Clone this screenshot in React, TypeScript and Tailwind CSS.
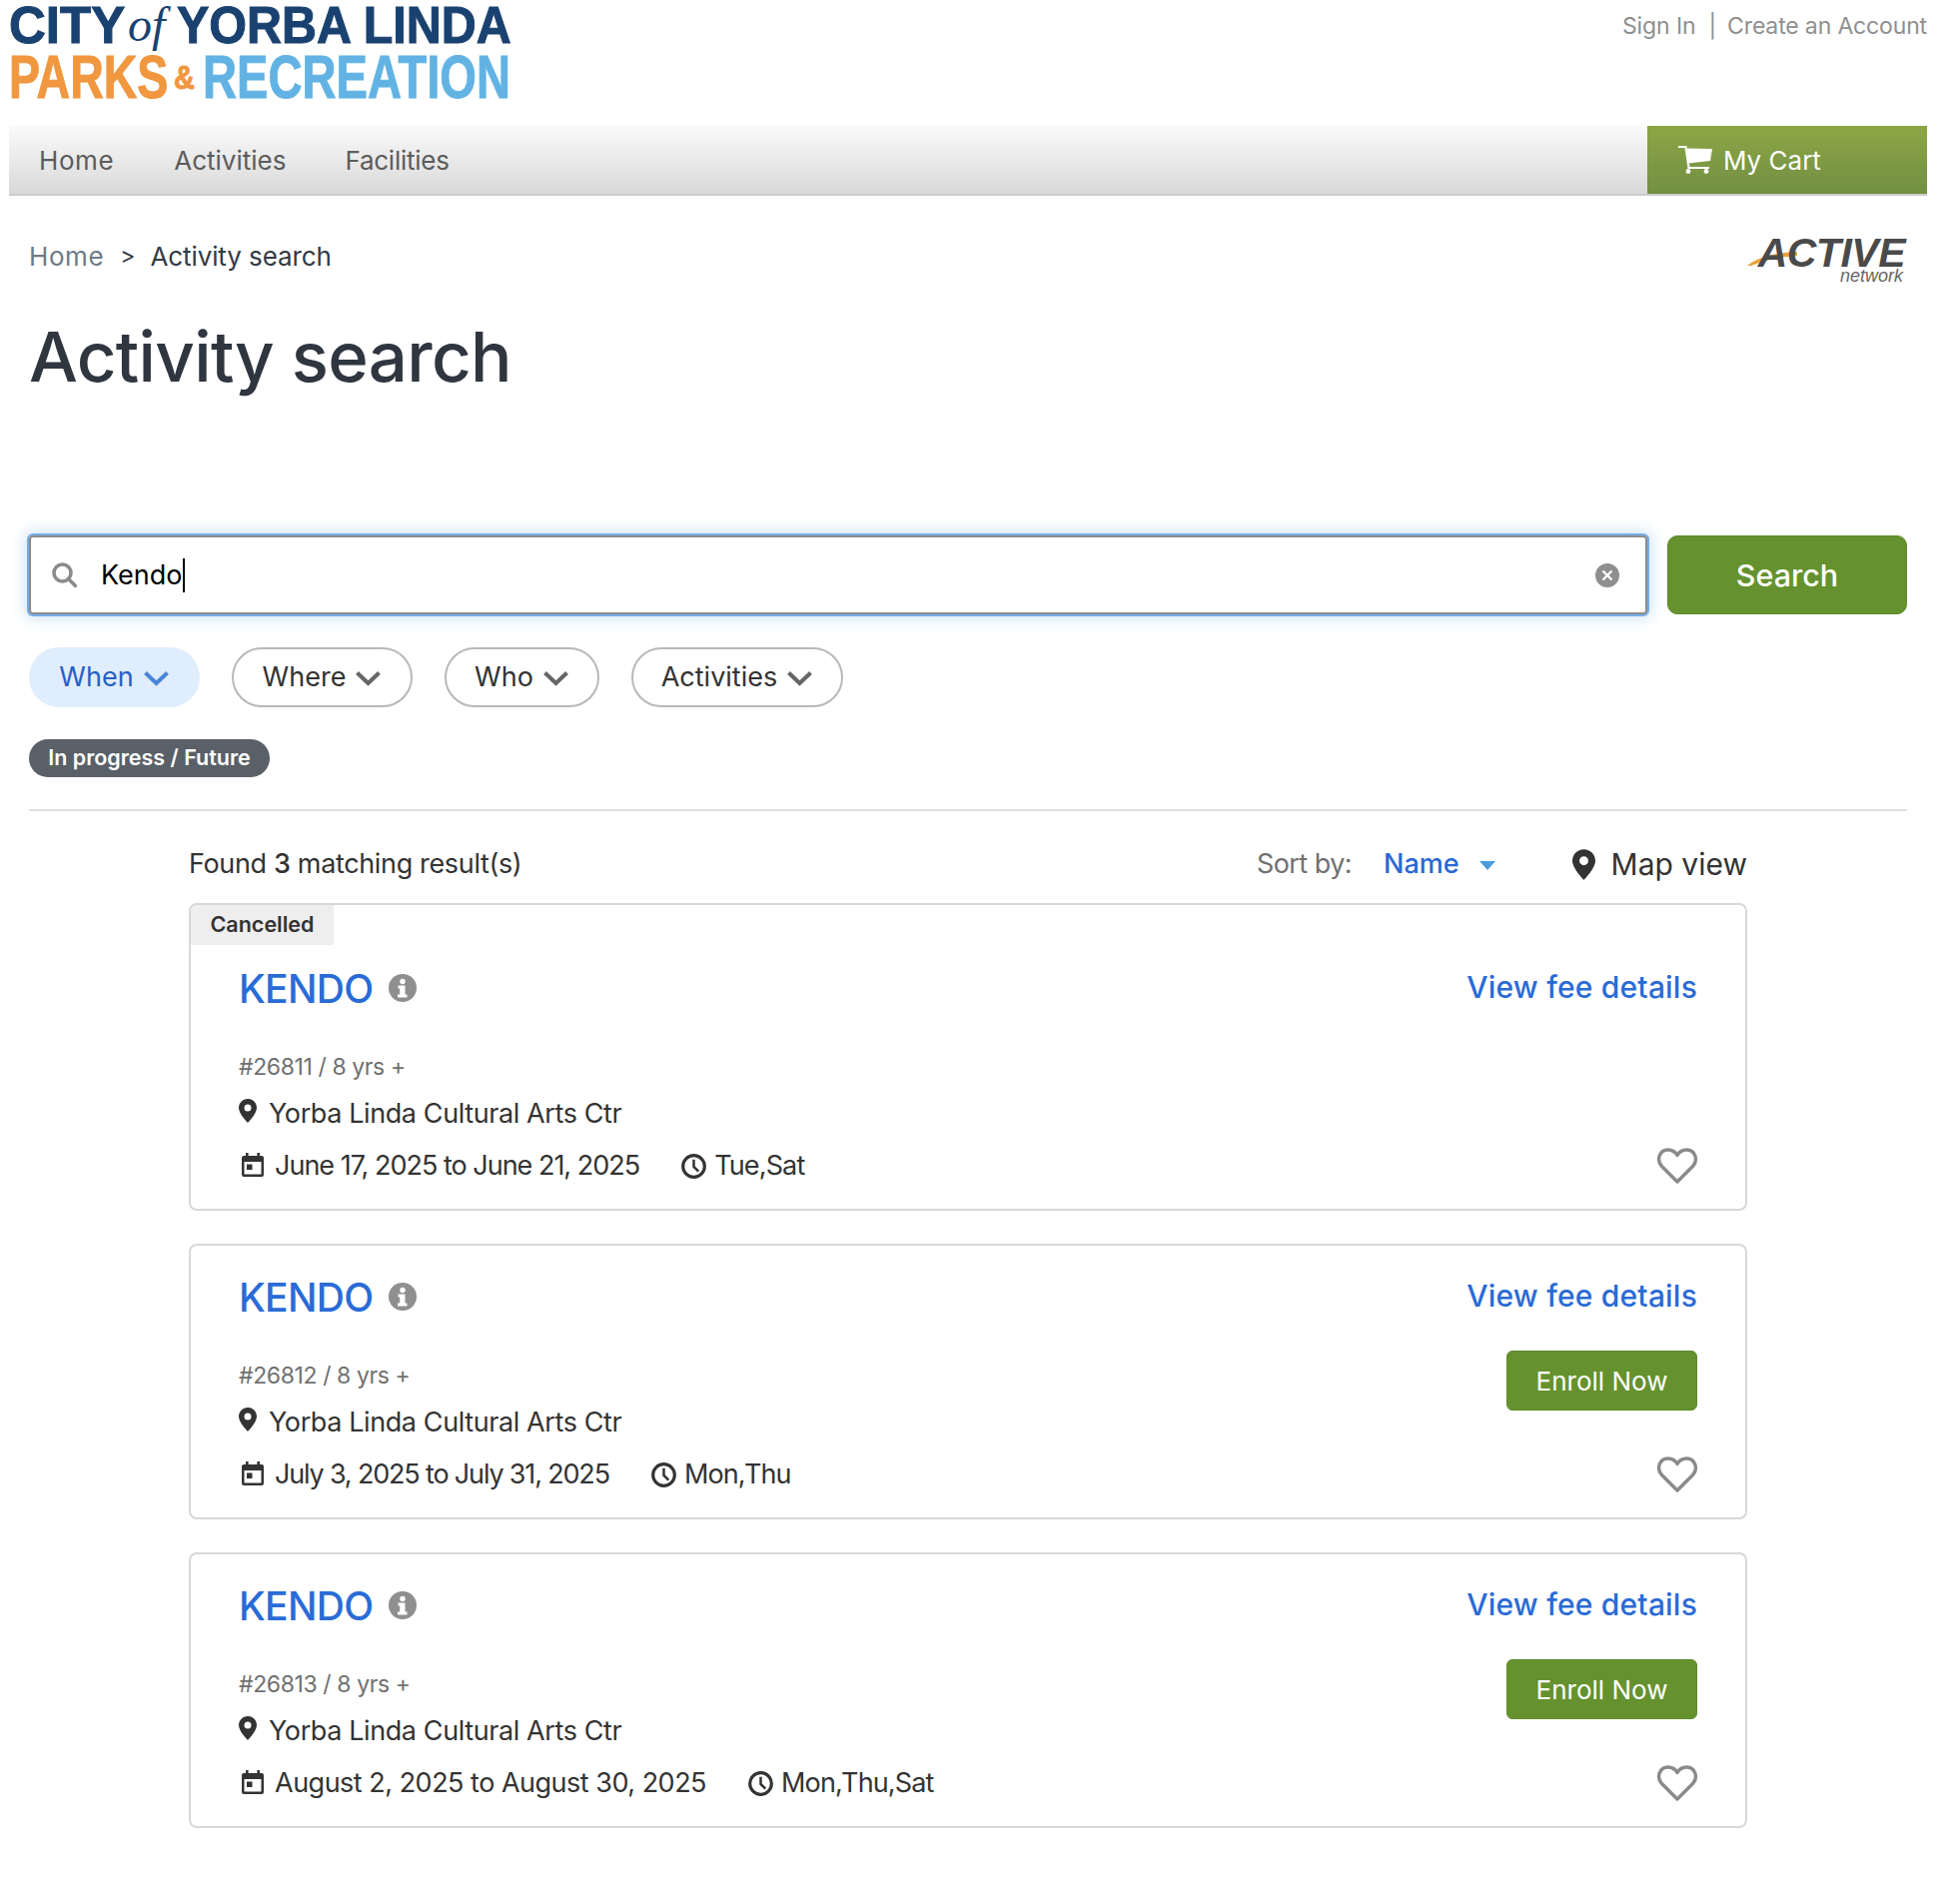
function Chevron({ className }: { className: string }) {
  return (
    <svg viewBox="0 0 26 16" className={className} fill="none" stroke="currentColor" strokeWidth="4">
      <polyline points="2,2.5 13,13 24,2.5" />
    </svg>
  )
}

function Pin({ className }: { className: string }) {
  return (
    <svg viewBox="0 0 18 24" className={className} fill="currentColor" fillRule="evenodd">
      <path d="M9 0C4 0 0 4 0 9c0 6 9 15 9 15s9-9 9-15c0-5-4-9-9-9ZM9 5.5a3.5 3.5 0 1 1 0 7 3.5 3.5 0 0 1 0-7Z" />
    </svg>
  )
}

function CalendarIcon({ className }: { className: string }) {
  return (
    <svg viewBox="0 0 22 24" className={className} fill="currentColor">
      <path d="M4 0h2.6v4H4zM15.4 0H18v4h-2.6z" />
      <path fillRule="evenodd" d="M2 3h18a2 2 0 0 1 2 2v17a2 2 0 0 1-2 2H2a2 2 0 0 1-2-2V5a2 2 0 0 1 2-2Zm.5 6v12.5h17V9Z" />
      <path d="M5 11.5h5.5V17H5z" />
    </svg>
  )
}

function ClockIcon({ className }: { className: string }) {
  return (
    <svg viewBox="0 0 24 24" className={className} fill="none" stroke="currentColor" strokeWidth="3">
      <circle cx="12" cy="12" r="10.4" />
      <path d="M12 5.5v7l4.6 4.4" strokeWidth="2.4" />
    </svg>
  )
}

function InfoIcon({ className }: { className: string }) {
  return (
    <svg viewBox="0 0 28 28" className={className}>
      <circle cx="14" cy="14" r="14" fill="#8f8f8f" />
      <circle cx="14" cy="7.5" r="2.7" fill="#fff" />
      <path d="M9.5 11.5h7v9h2v3h-9.5v-3h2.2v-6h-1.7Z" fill="#fff" />
    </svg>
  )
}

function HeartIcon({ className }: { className: string }) {
  return (
    <svg viewBox="0 0 42 38" className={className} fill="none" stroke="currentColor" strokeWidth="3.4" strokeLinejoin="round">
      <path d="M21 35 5.5 19.5C-.5 13 3.5 3 11.5 3 15.5 3 19 5 21 8.5 23 5 26.5 3 30.5 3c8 0 12 10 6 16.5Z" />
    </svg>
  )
}

function CartIcon({ className }: { className: string }) {
  return (
    <svg viewBox="0 0 34 28" className={className} fill="#fff">
      <path d="M7.5 2.5 34 3l-2 12-22 2.5Z" />
      <path d="M0 1h7.5l3 21H31" fill="none" stroke="#fff" strokeWidth="2.2" />
      <circle cx="10" cy="25.5" r="2.4" />
      <circle cx="28" cy="25.5" r="2.4" />
    </svg>
  )
}

function FilterPill({ label, active, width }: { label: string; active?: boolean; width: string }) {
  return (
    <div
      className={`flex h-[60px] items-center justify-center gap-[9px] rounded-[30px] text-[27px] ${width} ${
        active ? "bg-[#e0edfc] text-[#2760c4]" : "border-2 border-[#b8b8b8] text-[#333]"
      }`}
    >
      {label}
      <Chevron className={`mt-[2px] h-[16px] w-[27px] ${active ? "text-[#4a86d8]" : "text-[#666]"}`} />
    </div>
  )
}

type Result = {
  code: string
  dates: string
  days: string
  datesTracking: string
  cancelled?: boolean
}

const results: Result[] = [
  { code: "#26811", dates: "June 17, 2025 to June 21, 2025", days: "Tue,Sat", datesTracking: "tracking-[-1px]", cancelled: true },
  { code: "#26812", dates: "July 3, 2025 to July 31, 2025", days: "Mon,Thu", datesTracking: "tracking-[-1.17px]" },
  { code: "#26813", dates: "August 2, 2025 to August 30, 2025", days: "Mon,Thu,Sat", datesTracking: "tracking-[-0.5px]" },
]

function ResultCard({ item }: { item: Result }) {
  return (
    <div className="overflow-hidden rounded-[8px] border-2 border-[#d6d8db]">
      {item.cancelled && (
        <div className="flex h-[40px] w-[143px] items-center justify-center bg-[#eeeeee] pb-[2px] text-[21.5px] font-semibold text-[#333]">
          Cancelled
        </div>
      )}
      <div className={`flex justify-between pr-[48px] pl-[48px] pb-[26px] ${item.cancelled ? "pt-[19px]" : "pt-[27px]"}`}>
        <div>
          <div className="flex h-[48px] items-center gap-[16px]">
            <span className="text-[39px] leading-none font-medium tracking-[-0.7px] text-[#2a6bd6]">KENDO</span>
            <InfoIcon className="h-[28px] w-[28px]" />
          </div>
          <div className="mt-[39px] flex h-[32px] items-center text-[23px] tracking-[-0.4px] text-[#707070]">{item.code} / 8 yrs +</div>
          <div className="mt-[15px] flex h-[32px] items-center text-[27px] tracking-[-0.4px] text-[#333]">
            <Pin className="mr-[12px] mb-[6px] h-[24px] w-[18px] text-[#333]" />
            Yorba Linda Cultural Arts Ctr
          </div>
          <div className="mt-[19px] flex h-[34px] items-center text-[27px] text-[#333]">
            <CalendarIcon className="mr-[11px] mb-[3px] ml-[3px] h-[24px] w-[22px]" />
            <span className={item.datesTracking}>{item.dates}</span>
            <ClockIcon className="mr-[8px] ml-[42px] h-[25px] w-[25px]" />
            <span className="tracking-[-0.85px]">{item.days}</span>
          </div>
        </div>
        <div className="flex flex-col items-end">
          <a className="flex h-[46px] items-center text-[30px] font-medium tracking-[0.2px] text-[#2a6bd6]">View fee details</a>
          <div className={item.cancelled ? "hidden" : "mt-[32px]"}>
            <button className="flex h-[60px] w-[191px] items-center justify-center rounded-[6px] border border-[#5c8a2a] bg-[#65922e] text-[26px] text-white">
              Enroll Now
            </button>
          </div>
          <div className="mt-auto -mr-[1px] flex h-[34px] items-center">
            <HeartIcon className="h-[38px] w-[42px] text-[#8a8a8a]" />
          </div>
        </div>
      </div>
    </div>
  )
}

export default function App() {
  return (
    <div className="min-h-[1906px] bg-white font-['Inter',sans-serif]">
      <div className="ml-[9px] w-[1920px]">
        {/* header */}
        <div className="flex h-[126px] items-start justify-between">
          <div className="mt-[2px] flex h-[98px] w-[500px] flex-col font-['Liberation_Sans',sans-serif] font-bold whitespace-nowrap">
            <div className="flex h-[46px] items-center text-[51px] leading-none text-[#1a4270] [-webkit-text-stroke:1px_#1a4270]">
              <span className="w-[114px] shrink-0 origin-left">CITY</span>
              <span className="ml-[5px] w-[49px] shrink-0 font-['Liberation_Serif',serif] text-[48px] font-normal italic [-webkit-text-stroke:0]">of</span>
              <span className="shrink-0 origin-left scale-x-[0.95]">YORBA LINDA</span>
            </div>
            <div className="mt-[4px] flex h-[50px] items-center text-[62px] leading-none [-webkit-text-stroke:1px_currentColor]">
              <span className="w-[165px] shrink-0 origin-left scale-x-[0.75] text-[#f0973f]">PARKS</span>
              <span className="w-[29px] shrink-0 origin-left scale-x-[0.85] text-[34px] text-[#f0973f]">&amp;</span>
              <span className="shrink-0 origin-left scale-x-[0.76] text-[#62b3e3]">RECREATION</span>
            </div>
          </div>
          <div className="mt-[12px] flex items-center text-[23px] leading-[28px] text-[#8f8f8f]">
            <a className="tracking-[-0.1px]">Sign In</a>
            <span className="mr-[11px] ml-[13px]">|</span>
            <a className="tracking-[-0.15px]">Create an Account</a>
          </div>
        </div>

        {/* nav */}
        <div className="flex h-[70px] border-b-2 border-[#cccccc] bg-gradient-to-b from-[#fafafa] to-[#d9d9d9]">
          <div className="flex flex-1 items-center text-[26px] text-[#5c5c5c]">
            <a className="ml-[30px] tracking-[0.6px]">Home</a>
            <a className="ml-[60px]">Activities</a>
            <a className="ml-[59px] tracking-[-0.25px]">Facilities</a>
          </div>
          <div className="flex w-[280px] items-center bg-gradient-to-b from-[#8ca645] to-[#738f43] pl-[31px] text-[26px] text-white">
            <CartIcon className="mr-[11px] h-[28px] w-[34px]" />
            My Cart
          </div>
        </div>

        <div className="px-[20px]">
          {/* breadcrumb */}
          <div className="mt-[43px] flex h-[34px] items-center justify-between text-[26px]">
            <div className="flex items-center">
              <a className="tracking-[0.6px] text-[#6e7b85]">Home</a>
              <span className="mr-[15px] ml-[16px] text-[23px] text-[#333a44]">&gt;</span>
              <span className="tracking-[-0.1px] text-[#333a44]">Activity search</span>
            </div>
            <div className="relative h-[46px] w-[160px] font-['Liberation_Sans',sans-serif] text-[#4a4a4a] italic">
              <svg viewBox="0 0 50 14" className="absolute top-[19px] left-0 h-[14px] w-[50px]">
                <path d="M0 14 C10 6 26 1 50 0 L50 4 C32 5 16 9 4 14 Z" fill="#e8a33a" />
              </svg>
              <span className="absolute top-[-4px] right-[2px] text-[41px] leading-[48px] font-bold tracking-[-0.5px]">ACTIVE</span>
              <span className="absolute right-[4px] bottom-[-6px] text-[18px] leading-[18px] text-[#666]">network</span>
            </div>
          </div>

          <h1 className="mt-[44px] h-[80px] text-[69px] leading-[80px] font-medium tracking-[-0.7px] text-[#2f3640]">Activity search</h1>

          {/* search */}
          <div className="mt-[139px] flex h-[79px] gap-[20px]">
            <div className="flex flex-1 items-center rounded-[4px] border-2 border-[#8a8a8a] pr-[26px] pl-[21px] shadow-[0_0_0_2px_#74aee8,0_0_14px_5px_rgba(116,174,232,0.3)]">
              <svg viewBox="0 0 25 25" className="h-[25px] w-[25px] text-[#8a8a8a]" fill="none" stroke="currentColor" strokeWidth="3.6">
                <circle cx="10.5" cy="10.5" r="8.5" />
                <path d="M16.5 16.5 23.5 23.5" strokeLinecap="round" />
              </svg>
              <span className="ml-[24px] border-r-2 border-black text-[27px] leading-[34px] text-black">Kendo</span>
              <svg viewBox="0 0 24 24" className="ml-auto h-[24px] w-[24px]">
                <circle cx="12" cy="12" r="12" fill="#8f8f8f" />
                <path d="M7.5 7.5 L16.5 16.5 M16.5 7.5 L7.5 16.5" stroke="#fff" strokeWidth="2.4" />
              </svg>
            </div>
            <button className="w-[240px] rounded-[10px] border border-[#5c8a2a] bg-[#65922e] text-[30.5px] font-medium text-white">
              Search
            </button>
          </div>

          {/* filters */}
          <div className="mt-[33px] flex gap-[32px]">
            <FilterPill label="When" active width="w-[171px]" />
            <FilterPill label="Where" width="w-[181px]" />
            <FilterPill label="Who" width="w-[155px]" />
            <FilterPill label="Activities" width="w-[212px]" />
          </div>

          <div className="mt-[32px] flex h-[38px] w-[241px] items-center justify-center rounded-[19px] bg-[#596068] pb-[1px] text-[21.5px] font-semibold text-white">
            In progress / Future
          </div>

          <div className="mt-[32px] h-[2px] bg-[#dddddd]" />

          {/* results */}
          <div className="mr-[160px] ml-[160px]">
            <div className="mt-[33px] flex h-[40px] items-center text-[27px] text-[#333]">
              <span className="tracking-[-0.35px]">Found <span className="font-medium">3</span> matching result(s)</span>
              <span className="ml-auto tracking-[-0.55px] text-[#707070]">Sort by:</span>
              <span className="ml-[32px] font-medium text-[#2a68d2]">Name</span>
              <svg viewBox="0 0 16 9" className="mt-[2px] ml-[20px] h-[9px] w-[16px]">
                <path d="M0 0 H16 L8 9 Z" fill="#4a9bdb" />
              </svg>
              <Pin className="ml-[77px] h-[31px] w-[23px] text-[#333]" />
              <span className="ml-[16px] text-[30px]">Map view</span>
            </div>
            <div className="mt-[19px] flex flex-col gap-[33px]">
              {results.map((r) => (
                <ResultCard key={r.code} item={r} />
              ))}
            </div>
          </div>
        </div>
      </div>
    </div>
  )
}
